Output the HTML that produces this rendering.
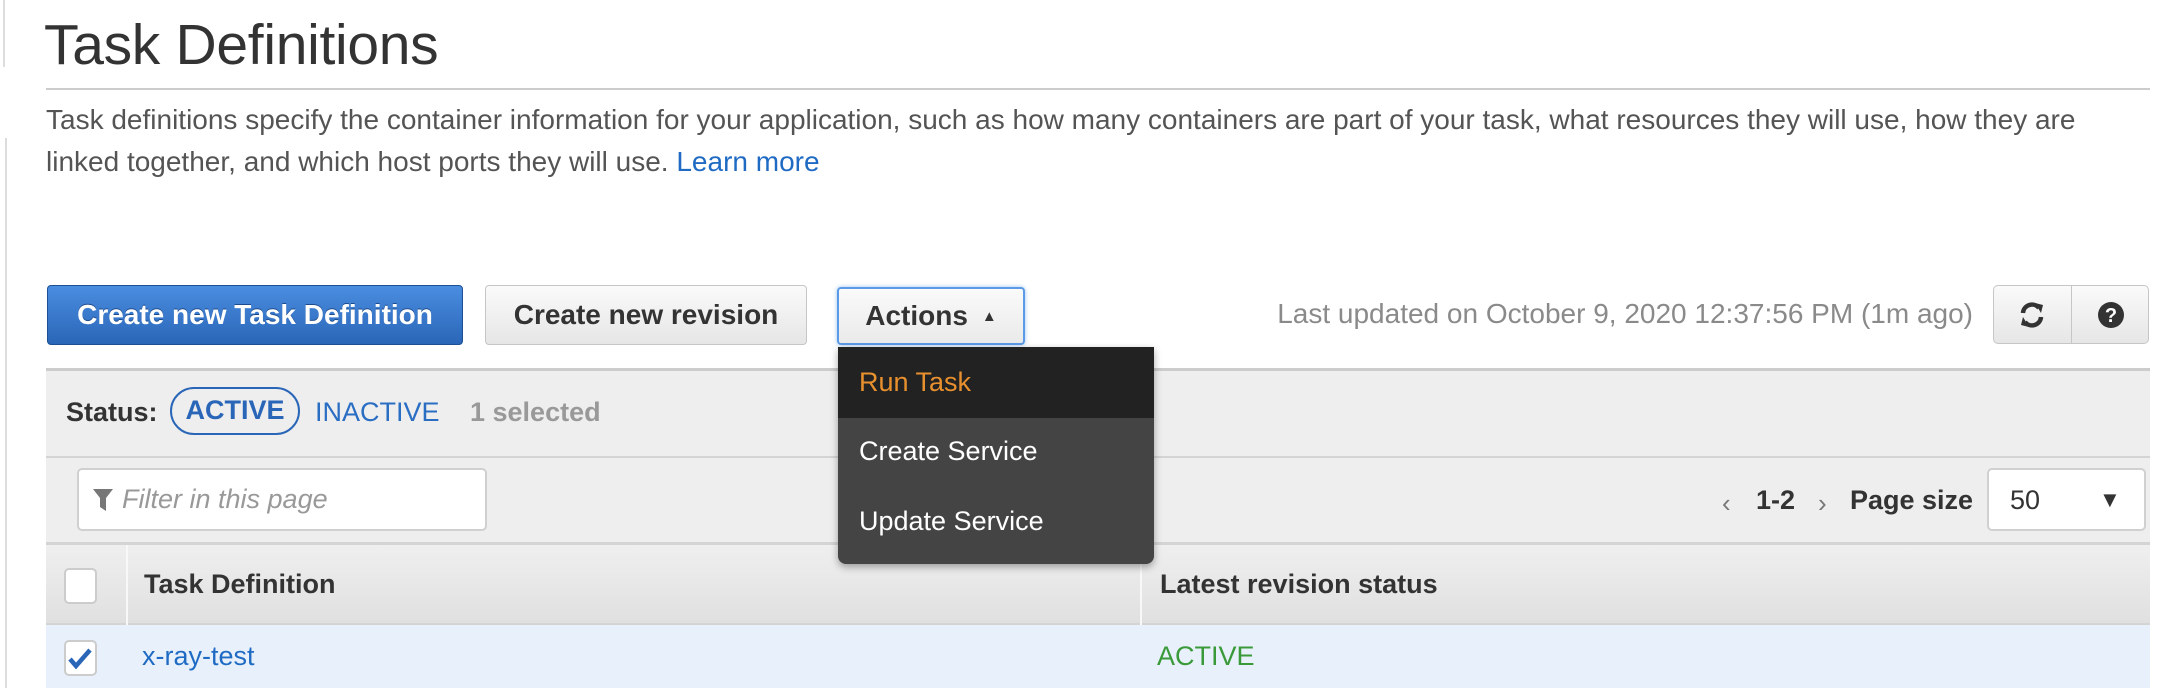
<!DOCTYPE html>
<html><head><meta charset="utf-8"><style>
*{box-sizing:border-box;margin:0;padding:0}
body{width:2168px;height:688px;overflow:hidden;background:#fff;font-family:"Liberation Sans",Arial,sans-serif;position:relative;color:#333}
.a{position:absolute;white-space:nowrap}
.btn{position:absolute;border-radius:4px;font-weight:bold;font-size:28px;display:flex;align-items:center;justify-content:center}
</style></head><body>
<div class="a" style="left:3px;top:0;width:2px;height:67px;background:#ddd"></div>
<div class="a" style="left:5px;top:138px;width:2px;height:550px;background:#ddd"></div>
<div class="a" style="left:44px;top:12px;font-size:57px;color:#333;letter-spacing:-0.3px">Task Definitions</div>
<div class="a" style="left:46px;top:88px;width:2104px;height:2px;background:#ccc"></div>
<div class="a" style="left:46px;top:99px;font-size:28px;line-height:42px;color:#545454">Task definitions specify the container information for your application, such as how many containers are part of your task, what resources they will use, how they are<br>linked together, and which host ports they will use. <span style="color:#1f6bc4">Learn more</span></div>

<div class="btn" style="left:47px;top:285px;width:416px;height:60px;background:linear-gradient(#4a8de0,#2a66b8);border:1px solid #1d4f94;color:#fff;text-shadow:0 -1px 0 #1c4a8a">Create new Task Definition</div>
<div class="btn" style="left:485px;top:285px;width:322px;height:60px;background:linear-gradient(#fafafa,#e6e6e6);border:1px solid #c6c6c6;color:#333">Create new revision</div>
<div class="btn" style="left:837px;top:287px;width:188px;height:58px;background:linear-gradient(#fafafa,#eaeaea);border:2px solid #5b9ae6;color:#333;box-shadow:0 0 4px #9bc3f0">Actions <span style="font-size:15px;margin-left:14px">▲</span></div>

<div class="a" style="right:195px;top:298px;font-size:28px;color:#8a8a8a">Last updated on October 9, 2020 12:37:56 PM (1m ago)</div>
<div class="a" style="left:1993px;top:285px;width:156px;height:59px;border:1px solid #c6c6c6;border-radius:5px;background:linear-gradient(#fafafa,#e6e6e6)"></div>
<div class="a" style="left:2071px;top:286px;width:1px;height:57px;background:#c6c6c6"></div>
<svg class="a" style="left:2018px;top:302px" width="28" height="26" viewBox="0 0 28 26"><path d="M5 11a9 9 0 0 1 16-5" stroke="#333" stroke-width="4.5" fill="none"/><path d="M17 1l8 2-2 8z" fill="#333"/><path d="M23 15a9 9 0 0 1-16 5" stroke="#333" stroke-width="4.5" fill="none"/><path d="M11 25l-8-2 2-8z" fill="#333"/></svg>
<svg class="a" style="left:2097px;top:301px" width="28" height="28" viewBox="0 0 28 28"><circle cx="14" cy="14" r="13" fill="#333"/><text x="14" y="21" font-family="Liberation Sans" font-weight="bold" font-size="20" fill="#fff" text-anchor="middle">?</text></svg>

<div class="a" style="left:46px;top:368px;width:2104px;height:257px;background:#eee;border-top:3px solid #ccc"></div>
<div class="a" style="left:46px;top:456px;width:2104px;height:2px;background:#d4d4d4"></div>
<div class="a" style="left:46px;top:542px;width:2104px;height:83px;background:linear-gradient(#efefef,#e0e0e0);border-top:3px solid #d4d4d4;border-bottom:2px solid #d4d4d4"></div>
<div class="a" style="left:126px;top:545px;width:2px;height:80px;background:#f8f8f8"></div>
<div class="a" style="left:1140px;top:545px;width:2px;height:80px;background:#f8f8f8"></div>
<div class="a" style="left:46px;top:625px;width:2104px;height:63px;background:#e8f1fb"></div>

<div class="a" style="left:66px;top:397px;font-size:27px;font-weight:bold;color:#333">Status:</div>
<div class="a" style="left:170px;top:387px;width:130px;height:48px;border:2px solid #2a66b8;border-radius:24px;font-size:27px;font-weight:bold;color:#2a66b8;text-align:center;line-height:42px">ACTIVE</div>
<div class="a" style="left:315px;top:397px;font-size:27px;color:#2a6ec4">INACTIVE</div>
<div class="a" style="left:470px;top:397px;font-size:27px;font-weight:bold;color:#999">1 selected</div>

<div class="a" style="left:77px;top:468px;width:410px;height:63px;background:#fff;border:2px solid #d0d0d0;border-radius:5px"></div>
<svg class="a" style="left:92px;top:488px" width="22" height="24" viewBox="0 0 22 24"><path d="M1 1h20l-7 9v13l-6-4v-9z" fill="#777"/></svg>
<div class="a" style="left:122px;top:484px;font-size:27px;font-style:italic;color:#999">Filter in this page</div>

<div class="a" style="left:1722px;top:488px;font-size:26px;color:#777">‹</div>
<div class="a" style="left:1756px;top:485px;font-size:27px;font-weight:bold;color:#333">1-2</div>
<div class="a" style="left:1818px;top:488px;font-size:26px;color:#777">›</div>
<div class="a" style="left:1850px;top:485px;font-size:27px;font-weight:bold;color:#333">Page size</div>
<div class="a" style="left:1987px;top:468px;width:159px;height:63px;background:#fff;border:2px solid #d0d0d0;border-radius:5px"></div>
<div class="a" style="left:2010px;top:485px;font-size:27px;color:#333">50</div>
<div class="a" style="left:2099px;top:487px;font-size:22px;color:#333">▼</div>

<div class="a" style="left:64px;top:568px;width:33px;height:36px;background:#fff;border:2px solid #ccc;border-radius:5px"></div>
<div class="a" style="left:144px;top:569px;font-size:27px;font-weight:bold;color:#333">Task Definition</div>
<div class="a" style="left:1160px;top:569px;font-size:27px;font-weight:bold;color:#333">Latest revision status</div>

<div class="a" style="left:64px;top:640px;width:33px;height:36px;background:#fff;border:2px solid #ccc;border-radius:5px"></div>
<svg class="a" style="left:68px;top:647px" width="24" height="22" viewBox="0 0 24 22"><path d="M2 12l6 7L22 3" stroke="#2a66b8" stroke-width="4.5" fill="none"/></svg>
<div class="a" style="left:142px;top:641px;font-size:27px;color:#1f6bc4">x-ray-test</div>
<div class="a" style="left:1157px;top:641px;font-size:27px;color:#3a9a3a">ACTIVE</div>

<div class="a" style="left:838px;top:347px;width:316px;height:217px;background:#444;border-radius:0 0 8px 8px;box-shadow:0 3px 8px rgba(0,0,0,.35);overflow:hidden">
<div style="height:71px;background:#222"></div></div>
<div class="a" style="left:859px;top:367px;font-size:27px;color:#e8902e">Run Task</div>
<div class="a" style="left:859px;top:436px;font-size:27px;color:#fff">Create Service</div>
<div class="a" style="left:859px;top:506px;font-size:27px;color:#fff">Update Service</div>
</body></html>
